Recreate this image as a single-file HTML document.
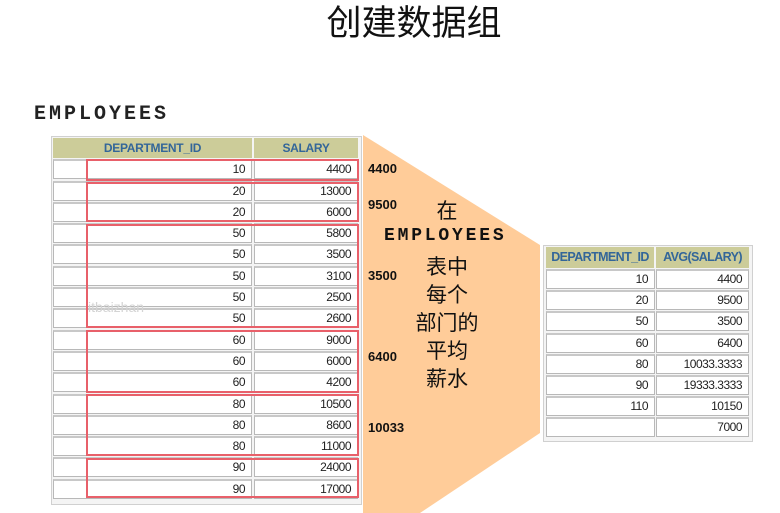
<!DOCTYPE html><html><head><meta charset="utf-8"><style>
body{margin:0;width:780px;height:513px;background:#fff;position:relative;overflow:hidden;font-family:"Liberation Sans",Arial,sans-serif}
.a{position:absolute}
.h{position:absolute;background:#cccc99;color:#336699;font-weight:bold;font-size:12px;text-align:center;line-height:20px;letter-spacing:-0.3px}
.c{position:absolute;background:#fff;border:1px solid #b8b8b8;border-top:2px solid #c8c8c8;box-sizing:border-box;text-align:right;font-size:12px;color:#222;padding-right:6px;line-height:17px;letter-spacing:-0.5px}
.r{position:absolute;border:2px solid #e8606a;box-sizing:border-box}
.n{position:absolute;font-weight:bold;font-size:13px;color:#111;left:368px}
.cj{position:absolute;font-family:"Noto Sans CJK SC",sans-serif;font-size:21px;color:#111;width:120px;text-align:center;left:387px;line-height:28px}
</style></head><body>
<div class="a" style="left:0;width:828px;text-align:center;font-family:'Noto Sans CJK SC',sans-serif;font-size:35px;top:-5px;color:#111">创建数据组</div>
<div class="a" style="left:34px;top:103px;font-family:'Liberation Mono',monospace;font-weight:bold;font-size:20px;letter-spacing:3px;color:#222">EMPLOYEES</div>
<svg class="a" style="left:0;top:0" width="780" height="513"><polygon points="363,135 540,245 540,433 420,513 363,513" fill="#ffcc99"/></svg>
<div class="a" style="left:51px;top:136px;width:309px;height:367px;border:1px solid #d0d0d0;background:#f4f4f4"></div>
<div class="h" style="left:53px;top:138px;width:199px;height:20px">DEPARTMENT_ID</div>
<div class="h" style="left:254px;top:138px;width:104px;height:20px">SALARY</div>
<div class="a" style="left:543px;top:245px;width:208px;height:195px;border:1px solid #d0d0d0;background:#f4f4f4"></div>
<div class="h" style="left:546px;top:247px;width:108px;height:21px;font-size:12.5px;letter-spacing:-0.6px">DEPARTMENT_ID</div>
<div class="h" style="left:656px;top:247px;width:93px;height:21px;font-size:12.5px;letter-spacing:-0.6px">AVG(SALARY)</div>
<div class="c" style="left:546px;top:269px;width:109px;height:20px">10</div><div class="c" style="left:656px;top:269px;width:93px;height:20px">4400</div>
<div class="c" style="left:546px;top:290px;width:109px;height:20px">20</div><div class="c" style="left:656px;top:290px;width:93px;height:20px">9500</div>
<div class="c" style="left:546px;top:311px;width:109px;height:20px">50</div><div class="c" style="left:656px;top:311px;width:93px;height:20px">3500</div>
<div class="c" style="left:546px;top:333px;width:109px;height:20px">60</div><div class="c" style="left:656px;top:333px;width:93px;height:20px">6400</div>
<div class="c" style="left:546px;top:354px;width:109px;height:20px">80</div><div class="c" style="left:656px;top:354px;width:93px;height:20px">10033.3333</div>
<div class="c" style="left:546px;top:375px;width:109px;height:20px">90</div><div class="c" style="left:656px;top:375px;width:93px;height:20px">19333.3333</div>
<div class="c" style="left:546px;top:396px;width:109px;height:20px">110</div><div class="c" style="left:656px;top:396px;width:93px;height:20px">10150</div>
<div class="c" style="left:546px;top:417px;width:109px;height:20px"></div><div class="c" style="left:656px;top:417px;width:93px;height:20px">7000</div>

<div class="c" style="left:53px;top:159px;width:199px;height:20px">10</div><div class="c" style="left:254px;top:159px;width:104px;height:20px">4400</div>
<div class="c" style="left:53px;top:181px;width:199px;height:20px">20</div><div class="c" style="left:254px;top:181px;width:104px;height:20px">13000</div>
<div class="c" style="left:53px;top:202px;width:199px;height:20px">20</div><div class="c" style="left:254px;top:202px;width:104px;height:20px">6000</div>
<div class="c" style="left:53px;top:223px;width:199px;height:20px">50</div><div class="c" style="left:254px;top:223px;width:104px;height:20px">5800</div>
<div class="c" style="left:53px;top:244px;width:199px;height:20px">50</div><div class="c" style="left:254px;top:244px;width:104px;height:20px">3500</div>
<div class="c" style="left:53px;top:266px;width:199px;height:20px">50</div><div class="c" style="left:254px;top:266px;width:104px;height:20px">3100</div>
<div class="c" style="left:53px;top:287px;width:199px;height:20px">50</div><div class="c" style="left:254px;top:287px;width:104px;height:20px">2500</div>
<div class="c" style="left:53px;top:308px;width:199px;height:20px">50</div><div class="c" style="left:254px;top:308px;width:104px;height:20px">2600</div>
<div class="c" style="left:53px;top:330px;width:199px;height:20px">60</div><div class="c" style="left:254px;top:330px;width:104px;height:20px">9000</div>
<div class="c" style="left:53px;top:351px;width:199px;height:20px">60</div><div class="c" style="left:254px;top:351px;width:104px;height:20px">6000</div>
<div class="c" style="left:53px;top:372px;width:199px;height:20px">60</div><div class="c" style="left:254px;top:372px;width:104px;height:20px">4200</div>
<div class="c" style="left:53px;top:394px;width:199px;height:20px">80</div><div class="c" style="left:254px;top:394px;width:104px;height:20px">10500</div>
<div class="c" style="left:53px;top:415px;width:199px;height:20px">80</div><div class="c" style="left:254px;top:415px;width:104px;height:20px">8600</div>
<div class="c" style="left:53px;top:436px;width:199px;height:20px">80</div><div class="c" style="left:254px;top:436px;width:104px;height:20px">11000</div>
<div class="c" style="left:53px;top:457px;width:199px;height:20px">90</div><div class="c" style="left:254px;top:457px;width:104px;height:20px">24000</div>
<div class="c" style="left:53px;top:479px;width:199px;height:20px">90</div><div class="c" style="left:254px;top:479px;width:104px;height:20px">17000</div>

<div class="a" style="left:88px;top:299px;font-size:14px;color:#d4d4d4">itbaizhan</div>
<div class="r" style="left:86px;top:159px;width:273px;height:22px"></div>
<div class="r" style="left:86px;top:182px;width:273px;height:40px"></div>
<div class="r" style="left:86px;top:224px;width:273px;height:104px"></div>
<div class="r" style="left:86px;top:330px;width:273px;height:63px"></div>
<div class="r" style="left:86px;top:394px;width:273px;height:62px"></div>
<div class="r" style="left:86px;top:458px;width:273px;height:40px"></div>

<div class="n" style="top:161px">4400</div>
<div class="n" style="top:197px">9500</div>
<div class="n" style="top:268px">3500</div>
<div class="n" style="top:349px">6400</div>
<div class="n" style="top:420px">10033</div>
<div class="cj" style="top:196px">在</div>
<div class="a" style="left:384px;top:226px;font-family:'Liberation Mono',monospace;font-weight:bold;font-size:18px;letter-spacing:2.8px;color:#111">EMPLOYEES</div>
<div class="cj" style="top:252px">表中<br>每个<br>部门的<br>平均<br>薪水</div>
</body></html>
